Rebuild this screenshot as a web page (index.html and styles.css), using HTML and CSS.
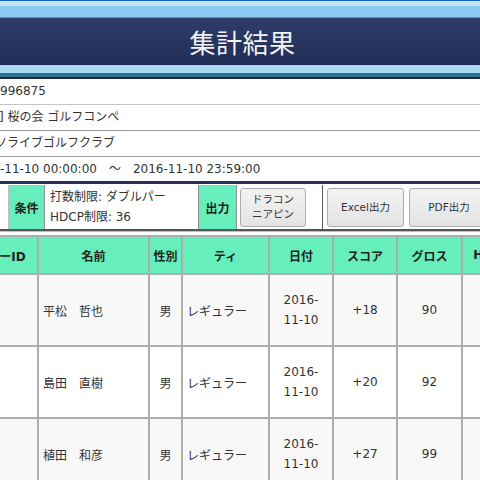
FILE: index.html
```html
<!DOCTYPE html>
<html lang="ja">
<head>
<meta charset="utf-8">
<title>集計結果</title>
<link rel="stylesheet" href="styles.css">
</head>
<body>
<div class="page">
  <header class="topbar">
    <div class="tb-line1"></div>
    <div class="tb-line2"></div>
    <div class="tb-line3"></div>
    <div class="tb-line4"></div>
    <div class="tb-main"><h1 class="title">集計結果</h1></div>
    <div class="tb-line5"></div>
    <div class="tb-line6"></div>
    <div class="tb-line7"></div>
  </header>

  <section class="info">
    <div class="info-row">996875</div>
    <div class="info-row info-row--ind1">] 桜の会 ゴルフコンペ</div>
    <div class="info-row info-row--ind5">ソライブゴルフクラブ</div>
    <div class="info-row">-11-10 00:00:00　～　2016-11-10 23:59:00</div>
  </section>

  <section class="cond">
    <div class="cond-cell cond-blank"></div>
    <div class="cond-cell cond-label cond-label--w1">条件</div>
    <div class="cond-cell cond-text">
      <div>打数制限: ダブルパー</div>
      <div>HDCP制限: 36</div>
    </div>
    <div class="cond-cell cond-label cond-label--w2">出力</div>
    <div class="cond-cell cond-btns cond-btns--first">
      <button class="btn btn--two">ドラコン<br>ニアピン</button>
    </div>
    <div class="cond-cell cond-btns cond-btns--second">
      <button class="btn btn--excel">Excel出力</button>
      <button class="btn btn--pdf">PDF出力</button>
    </div>
  </section>

  <div class="table-wrap">
    <table class="result">
      <colgroup>
        <col class="c-id"><col class="c-name"><col class="c-sex"><col class="c-tee">
        <col class="c-date"><col class="c-score"><col class="c-gross"><col class="c-hdcp">
      </colgroup>
      <thead>
        <tr>
          <th>プレーヤーID</th><th>名前</th><th>性別</th><th>ティ</th>
          <th>日付</th><th>スコア</th><th>グロス</th><th>HDCP</th>
        </tr>
      </thead>
      <tbody>
        <tr class="odd">
          <td></td><td class="left">平松　哲也</td><td>男</td><td class="left">レギュラー</td>
          <td class="date">2016-<br>11-10</td><td>+18</td><td>90</td><td></td>
        </tr>
        <tr class="even">
          <td></td><td class="left">島田　直樹</td><td>男</td><td class="left">レギュラー</td>
          <td class="date">2016-<br>11-10</td><td>+20</td><td>92</td><td></td>
        </tr>
        <tr class="odd">
          <td></td><td class="left">植田　和彦</td><td>男</td><td class="left">レギュラー</td>
          <td class="date">2016-<br>11-10</td><td>+27</td><td>99</td><td></td>
        </tr>
      </tbody>
    </table>
  </div>
</div>
</body>
</html>
```

FILE: styles.css
```css
html, body {
  margin: 0;
  padding: 0;
  background: #ffffff;
}
body {
  width: 480px;
  height: 480px;
  overflow: hidden;
  font-family: "DejaVu Sans", "Noto Sans CJK JP", sans-serif;
  font-size: 12px;
  color: #333333;
}
.page {
  width: 480px;
}

/* header */
.topbar { display: flex; flex-direction: column; }
.tb-line1 { height: 1px; background: #1f5fcc; }
.tb-line2 { height: 5px; background: #c3e6f8; }
.tb-line3 { height: 11px; background: #8ecbf2; }
.tb-line4 { height: 1px; background: #5b8db2; }
.tb-main {
  height: 47px;
  background: linear-gradient(#2d3c6b, #27355f 50%, #212d56);
  display: flex;
  align-items: center;
  justify-content: center;
  padding-left: 5px;
}
.title {
  margin: 0;
  font-family: "Noto Sans CJK JP", sans-serif;
  font-weight: 400;
  font-size: 26px;
  line-height: 30px;
  color: #f2f2f2;
  letter-spacing: 0.5px;
}
.tb-line5 { height: 8px; background: #a9dbf3; }
.tb-line6 { height: 4px; background: #2e6f8e; }
.tb-line7 { height: 2px; background: #1c2a46; }

/* info rows */
.info {
  display: flex;
  flex-direction: column;
  border-bottom: 3px solid #2a2f55;
}
.info-row {
  height: 25px;
  line-height: 25px;
  white-space: nowrap;
  border-bottom: 1px solid #9c9c9c;
}
.info-row:first-child { border-bottom: 1px solid #c4c4c4; }
.info-row:last-child { border-bottom: none; height: 24px; }
.info-row--ind1 { text-indent: -1px; }
.info-row--ind5 { text-indent: -5px; }

/* condition row */
.cond {
  display: flex;
  height: 44px;
  margin-top: 1px;
  border-bottom: 2px solid #555555;
  box-shadow: 0 1px 0 #c0c0c0;
}
.cond-cell {
  box-sizing: border-box;
  height: 44px;
  border-right: 1px solid #8e8e8e;
  flex: none;
}
.cond-blank { width: 9px; border-right-color: #bdbdbd; }
.cond-label {
  background: #66efbc;
  font-weight: bold;
  color: #222;
  display: flex;
  align-items: center;
  justify-content: center;
  font-family: "Noto Sans CJK JP", sans-serif;
}
.cond-label--w1 { width: 36px; }
.cond-label--w2 { width: 38px; }
.cond-text {
  width: 154px;
  padding: 2px 0 0 5px;
  line-height: 20px;
  white-space: nowrap;
}
.cond-btns {
  display: flex;
  align-items: center;
  gap: 5px;
}
.cond-btns--first { width: 86px; padding-left: 3px; border-right-color: #555; }
.cond-btns--second { flex: 1; padding-left: 4px; border-right: none; }

.btn {
  box-sizing: border-box;
  height: 39px;
  margin: 0;
  padding: 0;
  border: 1px solid #adadad;
  border-radius: 3px;
  background: linear-gradient(#f3f3f3, #e3e3e3);
  font-family: "DejaVu Sans", "Noto Sans CJK JP", sans-serif;
  font-size: 10.5px;
  line-height: 15px;
  color: #333;
  flex: none;
}
.btn--two { width: 66px; }
.btn--excel { width: 77px; }
.btn--pdf { width: 80px; }

/* results table */
.table-wrap {
  margin-top: 4px;
  margin-left: -62px;
}
.result {
  border-collapse: collapse;
  table-layout: fixed;
  width: 583px;
}
.c-id { width: 99px; }
.c-name { width: 111px; }
.c-sex { width: 33px; }
.c-tee { width: 87px; }
.c-date { width: 64px; }
.c-score { width: 64px; }
.c-gross { width: 65px; }
.c-hdcp { width: 60px; }

.result th, .result td {
  border: 2px solid #adadad;
  text-align: center;
  padding: 0;
  white-space: nowrap;
  overflow: hidden;
}
.result th {
  height: 36px;
  background: #66efbc;
  font-weight: bold;
  color: #222;
  font-size: 12px;
}
.result td {
  height: 70px;
  font-size: 12px;
  color: #333;
}
.result td.left { text-align: left; padding-left: 4px; }
.result td.date { line-height: 20px; }
.result tr.odd td { background: #f8f8f8; }
.result tr.even td { background: #ffffff; }
```
